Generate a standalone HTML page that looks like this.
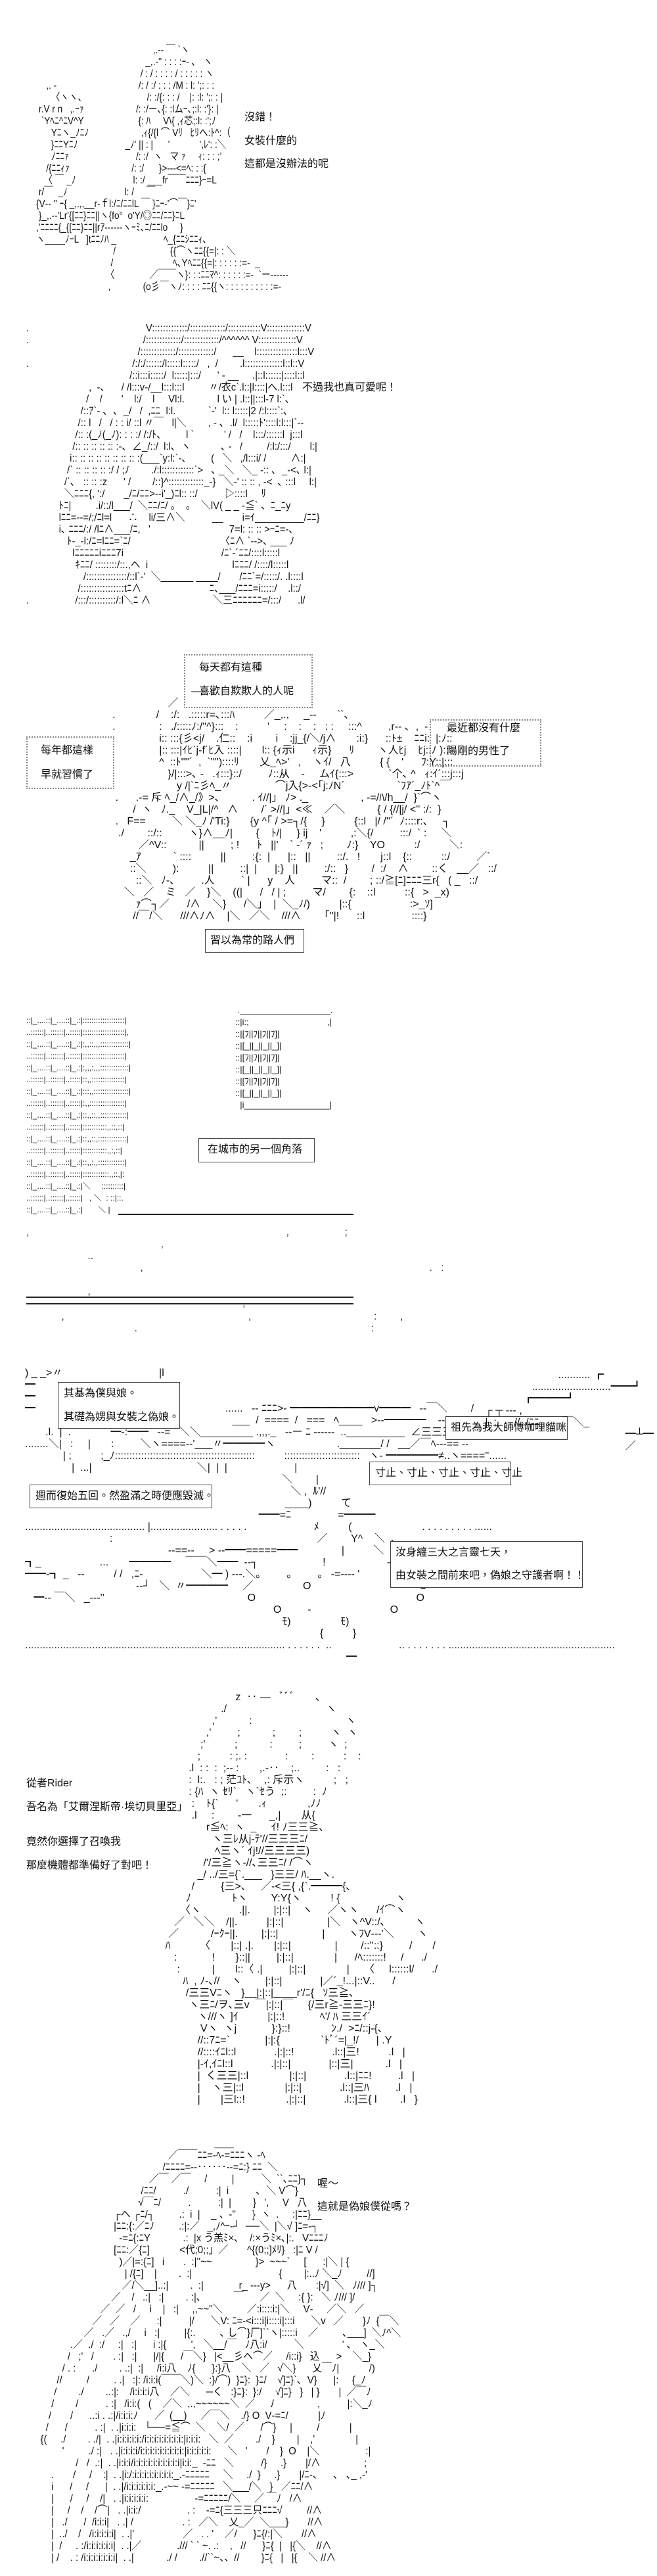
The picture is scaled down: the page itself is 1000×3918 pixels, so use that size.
<!DOCTYPE html>
<html><head><meta charset="utf-8">
<style>
html,body{margin:0;padding:0;background:#fff;}
body{width:1000px;height:3918px;position:relative;overflow:hidden;}
.aa{position:absolute;margin:0;white-space:pre;font:16px/18px "Liberation Sans","Noto Sans CJK JP",sans-serif;color:#111;transform-origin:0 0;}
.t{position:absolute;white-space:nowrap;font:16px/18px "Liberation Sans","Noto Sans CJK TC",sans-serif;color:#111;}
.box{position:absolute;border:1px solid #444;box-sizing:border-box;}
.dot{position:absolute;border:2px dotted #888;box-sizing:border-box;}
.br{position:absolute;border-left:1px solid #444;border-right:1px solid #444;box-sizing:border-box;}
.br:before,.br:after{content:"";position:absolute;left:0;right:0;height:6px;border-top:1px solid #444;}
.br:before{top:0}.br:after{bottom:0;border-top:none;border-bottom:1px solid #444;}
.hl{position:absolute;height:0;border-top:2px solid #222;}
</style></head><body>

<!-- PANEL 1 -->
<pre class="aa" style="left:40px;top:68px;transform:scaleX(0.85)">
                                                   ,.-‐ ￣ `ヽ
                                                _,.-'' : : : :ｰ‐ ､   ヽ
                                              / : / : : : : / : : : : : ヽ
        ,. -                                 /: / :/ : : : /M : l: ';: : :
          〈ヽヽ､                          /: :/{: : : /    |: :l: ';: : |
     r.V r n   ,.ｰｧ                     /: :/ー､{: :lムｰ､;:l: :'}: |
      `Yﾍﾆ^ﾆV^Y                      {: ﾊ     V\{ ,ｨ芯;:l: :';ﾉ
          Yﾆヽ_ﾉﾆﾉ                     ,ｨ{/{l ⌒ Vﾘ   ﾋﾘへ:ﾄ^:（
          }ﾆﾆYﾆﾉ                   _ﾉ' || : |      '            ',ﾚ': :＼
          ﾉﾆﾆｧ                           /: :/  ヽ   マ ｧ     ｨ: : : ;'
        /{ﾆﾆｨｧ                         /: :/      }&gt;‐‐‐&lt;=ﾍ: : :{
       〈 ￣ _ﾉ                       l: :/ ___fr￣￣ﾆﾆﾆ}ｰ=L
     r/￣  _ﾉ                       l: /     ￣
    {V‐- '' ｰ{ _,.,,__r-ｆl:/ﾆ/ﾆﾆlL ￣ }ﾆｰ-'⌒￣}ﾆ'
     }_,.-‐'Lr'{[ﾆﾆ}ﾆﾆ||ヽ{fo°  o'Y/◎ﾆﾆ/ﾆﾆ}ﾆL
    ,'ﾆﾆﾆﾆ{_{[ﾆﾆ}ﾆﾆ||rｱ‐‐‐‐‐‐ヽｰﾐ､ﾆ/ﾆﾆlo     }
    ヽ____ﾉｰL   ]tﾆﾆﾉﾊ _                   ﾍ_{ﾆﾆｼﾆﾆｨ､
                                   /                      {{⌒ヽﾆﾆ{{=|: : ＼
                                  /                        ﾍ､Yﾍﾆﾆ{{=|: : : : : :=-  _
                                〈              ／￣￣ヽ}: : :ﾆﾆﾏ^: : : : : :=-  `ー‐‐‐‐‐‐
                                 ,             (o彡￣ヽﾉ: : : : ﾆﾆ{{ヽ: : : : : : : : : :=-
</pre>
<div class="t" style="left:372px;top:170px">沒錯！</div>
<div class="t" style="left:372px;top:206px">女裝什麼的</div>
<div class="t" style="left:372px;top:241px">這都是沒辦法的呢</div>

<!-- PANEL 2 -->
<pre class="aa" style="left:40px;top:491px;transform:scaleX(0.93)">
.                                           V:::::::::::::/:::::::::::::/::::::::::::V::::::::::::::V
.                                          /:::::::::::::/:::::::::::::/^^^^^^ V::::::::::::::V
                                         /:::::::::::::/:::::::::::::/      __    l:::::::::::::::l:::V
.                                      /:/:/::::::/l:::::l:::::/   ,  /        .l::::::::::::::l::l::V
                                      /::i:::i:::::/  l:::::|:::/      ' - __     .|::l::::::|::::l::l
                       ,  -､      / /l:::v-/__l:::l:::l         〃/衣c`.l::|l::::|へ.l:::l
                      /    /       '    l:/    l     Vl:l.            l い | .l::||:::l-7 l:`､
                    /::ｱ`‐ ､  ､  _/   /  ,ﾆﾆ  l:l.            `‐'  l:: l:::::|2 /:l::::`:､
                   /:: l   /   / : : i/ ::l 〃￣   l|＼        , - ､  .l/  l:::::ﾄ'::::l:l:::|`‐-
                  /:: :(_ﾉ(_ﾉ): : : :/ /:/ﾄ､         l `           ' /   /    l:::/::::::l  j:::l
                 /:: :: :: :: :: :-､  ∠_/::/  l:l､  ヽ           ､ -   /         /:l:/:::/       l:|
                i:: :: :: :: :: :: :: :: :(___`y:l:`‐､         (   ＼   ,/l:::i/ /         ∧:|
               /` :: :: :: :: :/ / ;ﾉ        ./:l::::::::::::`&gt;   ､ _＼   ＼_ -:: ､  _-&lt;､ l:|
              /`､   :: :: :z      ' /        /::}^:::::::::::::_-}   ＼-' :: :: , -&lt;  ､ :::l     l:|
              ＼ﾆﾆﾆ{, ':/       _/ﾆ/ﾆﾆ&gt;--i'_)ﾆl:: ::/          ▷::::l     ﾘ
            ﾄﾆ|         .i/::/l___/  ＼ﾆﾆ/ﾆ/ 。  。  ＼lV( _ _ -≦` 、ﾆ_ﾆy
            lﾆﾆ=--=/;/ﾆl=l      ∴    li/三∧＼          __       i=ｲ_________/ﾆﾆ}
            i､ ﾆﾆﾆ/:/ /lﾆ∧___/ﾆ,   '                             7=l: :: :: &gt;ｰﾆ=-､
               ﾄ-_-l:/ﾆ=lﾆﾆ=`ﾆ/                                 〈ﾆ∧ `--&gt;､ ___ ﾉ
                 lﾆﾆﾆﾆﾆiﾆﾆﾆ7i                                    /ﾆ`-´ﾆﾆ/::::l:::::l
                  ｷﾆﾆ/ ::::::::/::.,ヘ  i                               lﾆﾆﾆ/ /::::/l:::::l
                     /:::::::::::::::/::l`-'  ＼______ ____/       /ﾆﾆ`=/:::::/. .l::::l
                   /::::::::::::::::tﾆ∧                         ﾆ､___/ﾆﾆﾆ=i:::::/    .l::/
.                 /:::/::::::::::/:l＼ﾆ ∧                       ＼三ﾆﾆﾆﾆﾆﾆ=/:::/      .l/
</pre>
<div class="t" style="left:460px;top:581px">不過我也真可愛呢！</div>

<!-- PANEL 3 -->
<div class="dot" style="left:280px;top:995px;width:196px;height:82px"></div>
<div class="t" style="left:303px;top:1007px">每天都有這種</div>
<div class="t" style="left:303px;top:1043px">喜歡自欺欺人的人呢</div>
<div class="dot" style="left:40px;top:1120px;width:134px;height:80px"></div>
<div class="t" style="left:62px;top:1133px">每年都這樣</div>
<div class="t" style="left:62px;top:1170px">早就習慣了</div>
<div class="dot" style="left:654px;top:1094px;width:170px;height:72px"></div>
<div class="t" style="left:680px;top:1099px">最近都沒有什麼</div>
<div class="t" style="left:680px;top:1134px">陽剛的男性了</div>
<pre class="aa" style="left:140px;top:1043px">
                                  ―‐ .
                          ／
       .              /    :/:   .:::::r=､:::ﾊ          ／_,.,     _--       ``､
       .               :   ./:::::ﾉ:/''^}:::    :          '     :    :    :   : :     :::^         ,r-- ､  ,  -
                       i:: :::{彡&lt;j/    .仁::    :i        i    :jj_{/＼/j∧       :i:}      ::ﾄ±    ﾆﾆi:  |:ﾉ::
                       |:: :::|ｲﾋ`j-f´ﾋ入 ::::|       l:: {ｨ示i      ｨ示}      ﾘ        ヽ人ﾋj    ﾋj::ﾉ ):::
                       ^  ::ﾄ''''´  ,  `'''')::::ﾘ       乂_ﾍ&gt;'   ,    ヽｲ/   八          { {    '      ﾌ:Y::|:::
                          }/|:::&gt;､ ‐   .ｨ:::}::/         ﾉ::从    ‐     ムｲ{:::&gt;            `个､ ^   ｨ:ｲ´:::j:::j
                             y /|`ﾆ彡ﾍ_〃               ⌒j入{&gt;‐&lt;｢j:ﾉN´                  `ﾌｱ´_ﾉﾄ`^￣
        .      .-= 斥 ﾍ_/∧_/》&gt;､           . ｲ//|」 ﾉ&gt; ._                  , -=/ﾊ/h__/  }`⌒ヽ
              /  ヽ   ﾉ._    V_|L|/^   ∧        /´ &gt;//|」&lt;≪    ／＼           { / {//|j/ &lt;'' :/:  }
        .   F==         ＼ ＼_ﾉ /'Ti:}       {y ^｢ / &gt;=┐/{     }          {::l   |/ /''´  ﾉ::::r:､     ┐
         ./        ::/::         ヽ}∧__ﾉ|        {    ﾄ/|     } ij    '          ,:＼{/         :::/  ` :     ＼
                ／^V::           ||         ; !      ﾄ   ||'    ` ‐´ ｧ   ;        ﾉ:}    YO          :/          ＼:
             _ｱ           ` ::::          ||         :{:  |      |::   ||         ::/.   !       j::l    {::          ::/         ／`
             ::＼         ):          ||         ::|  |      |:}   ||         :/::   }        /  :/    ∧        ::く   __／   ::/
               ::＼   ﾉ‐､         .人         ` |      y    人         マ::  /        ; ::/≧[ﾆ]ﾆﾆﾆ三r{   ( _   ::/
           ＼   ／    ミ   ／    }＼    ((|      /   / | ;         マ/        {:    ::l          ::{   &gt;  _x)
               ｧ⌒┐／      /∧    ＼}      /＼」  |  ＼_ﾉ/)          |::{                    :&gt;_ｿ]
              //￣/＼      ///∧ﾉ∧    |＼   ／＼    ///∧        ｢''|!      ::l                ::::}
</pre>
<div class="br" style="left:312px;top:1413px;width:151px;height:36px"></div>
<div class="t" style="left:320px;top:1422px">習以為常的路人們</div>

<!-- PANEL 4 -->
<pre class="aa" style="left:40px;top:1543px;font-size:12px;line-height:18px">
::|_....::|_....::|_.:|:::::::::::::::::::|
..::::::|..::::::|..:::::|:::::::::::::::::::|,
::|_....::|_....::|_.:|:,,::,,,:::::::::::::|
..::::::|..::::::|..:::::|:::::::::::::::::::|
::|_....::|_....::|_.:|:,,,:,,,:::::::::::::|
..::::::|..::::::|..:::::|::,,:::::::::::::::|
::|_....::|_....::|_.:|:::,,::::::::::::::::|
..::::::|..::::::|..:::::|:,,::::::::::::::::|
::|_....::|_....::|_.:|::,,::,,::::::::::::|
..::::::|..::::::|..:::::|:::::::::::,,::,::|
::|_....::|_....::|_.:|::,,::,:::::::::::::|
..::::::|..::::::|..:::::|:::::::::::,,:,::|
::|_....::|_....::|_.:|::,,:,,::::::::::::|
..::::::|..::::::|..:::::|::::::::::::,,::,|:
::|_....::|_....::|_.:|＼     ::::::::::|
..::::::|..::::::|..:::::|   , ＼  : ::|::.
::|_....::|_....::|_.:|       ＼ |
</pre>
<div class="hl" style="left:180px;top:1846px;width:358px;border-top-width:2px"></div>
<pre class="aa" style="left:358px;top:1528px;font-size:13px;line-height:18px">
 .___________________.
::|i:;                                 ,|
::|[ﾌ||ﾌ||ﾌ||ﾌ]|
::|[_||_||_||_]|
::|[ﾌ||ﾌ||ﾌ||ﾌ]|
::|[_||_||_||_]|
::|[ﾌ||ﾌ||ﾌ||ﾌ]|
::|[_||_||_||_]|
  |i__________________|
</pre>
<div class="br" style="left:302px;top:1731px;width:177px;height:37px"></div>
<div class="t" style="left:316px;top:1740px">在城市的另一個角落</div>
<pre class="aa" style="left:40px;top:1866px;color:#333">
,                                                                                        ,                   ;
                                              ,
                     ..
                                       ,                                                                                                  .   :

                     ,
                                                                          ,
</pre>
<div class="hl" style="left:40px;top:1972px;width:498px;border-top-width:2px"></div>
<div class="hl" style="left:40px;top:1982px;width:498px;border-top-width:2px"></div>
<pre class="aa" style="left:40px;top:1994px;color:#333">
            ,                                                               ,                                          :        ,
                                     .                                                                                :
</pre>

<!-- PANEL 5 -->
<pre class="aa" style="left:38px;top:2080px">
) _ _&gt;〃                                 |l
━
━
━                                                                 ......   -- ﾆﾆﾆ&gt;- ━━━━━━━━v━━━   --￣＼        /
                                                                       ___  /  ====  /   ===   ﾍ____   &gt;--━━━━    --=ﾆ
       .l.  |  .          ￣━-:━━   --=   ＼＼_________ .,,,._   --ー ﾆ ------  ..__________  ∠三三三&gt;   ---=
........＼|   :     |       :         ＼ヽ====-‐'___〃━━━━ヽ                     ._______/ /   __／￣ﾍ---== --
             | ;          ;_ﾉ::::::::::::::::::::::::::::::::::::::::::::::::          ::::::::::::::::::::::::::   ヽ- ━━━━━≠..ヽ====''......
                |  ...|                                    ＼|  |  |                       |                                         ,
                                                                                        ＼        |
                                                                                           ＼ ,  ﾙ'//
                                                                                         ____)          て
                                                                                ━━=ﾆ                =━━━
......................................... |....................... . . . . .                       ﾒ          (                        . . . . . . . . . ......
                             :                                                                      ／        Y^    ＼  ､
                                                 --==--     &gt; --━━=====━━               |          ＼            --- ___
┓_                    ...       ━━━━     ￣￣＼━━  --┐                      !                     - ____／
━━-┓ _   --          / /   ,ﾆ-                    ＼━ ) ---.＼。       。       。 -=---- '
                                      --┘   ＼  〃━━━━     ／                 O                                     O
   ━-- ￣＼   _---''                                                 O                                                       O
                                                                                     O         -                           O
                                                                                        ﾓ)                 ﾓ)
                                                                                                     {          }
......................................................................................... . . . . . .  ..                       .. . . . . . . . .........................................................
                                                                                                              ━
</pre>
<div class="box" style="left:88px;top:2102px;width:186px;height:71px;background:#fff"></div>
<div class="t" style="left:97px;top:2111px">其基為僕與娘。</div>
<div class="t" style="left:97px;top:2147px">其礎為娚與女裝之偽娘。</div>
<div class="box" style="left:45px;top:2258px;width:278px;height:36px;background:#fff"></div>
<div class="t" style="left:54px;top:2267px">週而復始五回。然盈滿之時便應毀滅。</div>
<div class="box" style="left:678px;top:2154px;width:186px;height:36px;background:#fff"></div>
<div class="t" style="left:686px;top:2163px">祖先為我大師傅咖哩貓咪</div>
<div class="box" style="left:562px;top:2223px;width:216px;height:36px;background:#fff"></div>
<div class="t" style="left:571px;top:2232px">寸止、寸止、寸止、寸止、寸止</div>
<div class="box" style="left:594px;top:2344px;width:293px;height:71px;background:#fff"></div>
<div class="t" style="left:602px;top:2353px">汝身纏三大之言靈七天，</div>
<div class="t" style="left:602px;top:2388px">由女裝之間前來吧，偽娘之守護者啊！！</div>
<pre class="aa" style="left:725px;top:2083px">
                            ........... ┏
                   ...........................━━┛
                ┏━━━┛
   ┌ ┬ --- ,
   |  ;    _// ./ﾆﾆ_..    ￣＼_
                                                   ━┴━
                                                   ／
</pre>

<!-- PANEL 6 -->
<pre class="aa" style="left:225px;top:2573px">
                              z  ‥ ―   ﾞﾞﾞ       ､
                         ./                                  ヽ
                      ,'           :                                ヽ
                    ,'         ;           ;        ;          ヽ  ヽ
                  ;'          ;           :         ;         ヽ  ;
                 ;          : ;. :             :        :          :    :
              .l  : :  :  ;-‐ :       ,.‐‥    ;..         :   :
              :  l:.   : ; 茫ﾕﾄ､    ,: 斥示ヽ          ;   ;
              : {ﾊ  ヽ ｾﾘ`   ヽ`ｾう  ;:         :  ﾉ
               :    ﾄ{`      '       .ｨ              ,ﾉﾉ
               .l     :        ‐一      _,|       从{
                    r≦ﾍ:  ヽ  _     ｲ! ﾉ三三≧､
                      ヽ三ﾚ从j-ﾃ'//三三三ﾆ/
                       ﾍ三ヽ´ ｲj!//三三三三)
                   /'/三≧ヽ-//､三三ﾆ/ /⌒ヽ
                 _/ ../三={`.___   }三三/ ﾊ.__ヽ.
               /         {三&gt;､     ／-&lt;三{ ,{`.━━━{､
             ﾉ              ﾄヽ        Y:Y{ヽ          ! {                   ヽ
           〈ヽ             .||.        |:|::|    ヽ     ／ヽヽ      /ｲ⌒ヽ
         ／   ＼＼    /||.          |:|::|               |＼   ヽ^V::/､          ヽ
       ／           /ｰｸｰ||.        |:|::|               |        ヽﾌV‐‐‐'＼        ヽ
      ﾊ          〈       |::| .|.       |:|::|               |        /::''::}         /       /
         :            !       }::||         |:|::|              |      /ﾍ:::::::!     /      ./
          :           |       l::〈 .|         |:|::|              |     〈     l::::::l/      ./
            ﾊ  , ﾉ-､//    ヽ        |:|::|             |／´_!...|::V..      /
             /三三Vﾆヽ   }__|:|::|____r'/ﾆ{   ｿ三≧､
              ヽ三ﾆ/ヲ､三v  ￣|:|::|￣     {/三r≧-三三ﾆ}!
                 ヽ///ヽ ]ｲ          |:|::!            ﾍ'/ ﾊ 三三ｲ´
                  Vヽ  ヽj            }:}::!              ﾝ./  &gt;ﾆ/::j-{､
                 //::7ﾆ=`            |:|:{              `ﾄﾞ´=|_!/      | .Y
                 //::::ｲﾆl::l             .|:|::!             .l::|三!          .l   |
                 |-ｲ,ｲﾆl::l             .|:|::|             |::|三|           .l   |
                 |  く三三|::l              |:|::|             .l::|ﾆﾆ!         .l   |
                 |    ヽ三|::l              |:|::|             .l::|三ﾊ         .l   |
                 |       |三l::!              .|:|::|             .l::|三{ l        .l   }
</pre>
<div class="t" style="left:40px;top:2704px">從者Rider</div>
<div class="t" style="left:40px;top:2740px">吾名為「艾爾涅斯帝·埃切貝里亞」</div>
<div class="t" style="left:40px;top:2793px">竟然你選擇了召喚我</div>
<div class="t" style="left:40px;top:2829px">那麼機體都準備好了對吧！</div>

<!-- PANEL 7 -->
<pre class="aa" style="left:45px;top:3252px;transform:scaleX(0.93)">
                                                                    ＿＿
                                                   ／￣￣ﾆﾆ=‐ﾍ‐=ﾆﾆﾆヽ ‐ﾍ
                                                 /ﾆﾆﾆﾆ=‐‐‥‥‥‐‐=ﾆ:} ﾆﾆ  ＼
                                            ／￣ ／￣     /         |          ＼  ``､ﾆﾆ}┐
                                         /ﾆﾆ/          ./          :|  i          ､  ＼ V⌒}
                                        √￣ﾆ/          .          :|  |        }   ',     V   八
                               ┌ヘ ┌ﾆ/┐         .:  i  |    _ 、-''      }  ヽ  .     :|ﾆﾆ}__
                               |ﾆﾆ:{:／ﾆﾉ         .:|:／   _,ﾉ^ｰ‐┘  ──＼  |＼√ ]ﾆ=-┐
                                 -=ﾆ{:ﾆY            .:  |x う羔ﾐ×､    /:×うﾐ×､|:.   Vﾆﾆﾆﾉ
                               [ﾆﾆ:／{ﾆ]           &lt;代;0;;」／       ^{(0;;]ﾒﾘ}   :|ﾆ V /
                                 )／|=:{ﾆ]   i       .  :|''~~                }&gt;  ~~~`     [      :|＼ | {
                                   | /{ﾆ]    |        .  :|                                {        |:..ﾉ ＼_ﾉ         //]
                                  ／/＼__]..:|        .  :|             r_ ---y&gt;      八       :|√]  ＼   ﾉ/// ]┐
                              ／    /   .:|   :|        . :|､            ￣      ／  ＼     :{ }:   ＼ ﾉ/// ]/
                          ／  ／   /     i    |   :|     ,,~~''＼         ／:i::::i:|＼     V‐     ／＼   ／
                       ／   ／    ／      :|          |/      ＼V: ﾆ=-&lt;i:::i|i::::i|:::i      ＼v   ／       }ﾉ  {￣＼
                    ／   .／   .,/     i   :|         |{:.         ､ し⌒}厂]``ヽ|:::::i    ／         ､___]  ＼ﾉ^＼
               .／  ./  :/     :|   :|      i :|{         ',   ＼__/￣   ﾉ八:i/          ＼              ' ､   ヽ_＼
              /   ;'   /       . :|   :|      |/|{      /￣＼}   |&lt;__彡ヘ⌒／     /i::i}   込      &gt;    ＼_}
            / . :      ./        . .:|  :|     /i:i八    ﾉ{      }:}八    ＼   ／   √＼}      乂￣ﾉ|           /)
          //         /         . .|   :|: /i:i:i(￣￣＼)＼  :}/⌒)  }ﾆ}:  }ﾆ/    √]ﾆ}`､  V}      |:     {_ﾉ
         /        ./        ..:|:    /i:i:i:i八    ／＼      ─く   :}ﾆ}:  }:/     √]ﾆ}   }   | }       |  ／￣ﾉ
        /        /          . :|   /i:i:(   (    ／＼  ,.,~~~~~~＼  ／      /                ,          |:＼_ﾉ
       /       /      ..:i . .:|/i:i:i:ﾉ      ／  (__)     ／￣＼    ./} O  V‐=ﾆ/           |ﾉ
      /      /          . :|  . .|i:i:i:   └──=≦⌒  ＼    ＼/  ／      /⌒}     |         /           |
    {(     ./        . ./|  . .|i:i:i:i:i:/i:i:i:i:i:i:i:i:|i:i:i:   ＼  ／        ./    }        |    ,'               |
            '         ./ :|   . .|i:i:i:i/i:i:i:i:i:i:i:i:i:|i:i:i:i:i:      ＼   '       /    }  O    |＼                 :|
                 /   /  .:|  . .|i:i:i/i:i:i:i:i:i:i:i:i:i|i:i:_  -ﾆﾆ   ＼          /}     .}       |/∧                ;
        .       /     /    :|  . .|i:/:i:i:i:i:i:i:i:i:_.-ﾆﾆﾆﾆﾆ     ＼     ./  }     .}       |/ﾆ-、    ､   ､_ ,-'
        i      /     /      |  . .|/i:i:i:i:i:i:_.-~~ ‐=ﾆﾆﾆﾆﾆ   ＼___/＼   }   ／ﾆﾆ/∧
        |      /     /    /|   . .|i:i:i:i:i:                 -=ﾆﾆﾆﾆﾆ/＼     ／ ￣ﾉ   /∧
        |     /    /    /⌒|   . .|i:i:/                 . :    -=ﾆ{三三三只ﾆﾆﾆ√         //∧
        |   ./      /  /i:i:i|   . .| /                  . :   ／＼    乂_／  ＼___}       //∧
        |  ../    /   /i:i:i:i:i|  . .|'                  ／   . . '    ／/      }ﾆ{/:|＼       //∧
        |  /     . :/i:i:i:i:i:i|  . .|／             ./// ` ` ~. .:    ,   //      }ﾆ{  |   |{＼    //∧
        | /    . : /i:i:i:i:i:i:i|  . .|            ./ /        .//``~、、//        }ﾆ{   |   |{    ＼ //∧
</pre>
<div class="t" style="left:483px;top:3313px">喔～</div>
<div class="t" style="left:483px;top:3348px">這就是偽娘僕從嗎？</div>

</body></html>
